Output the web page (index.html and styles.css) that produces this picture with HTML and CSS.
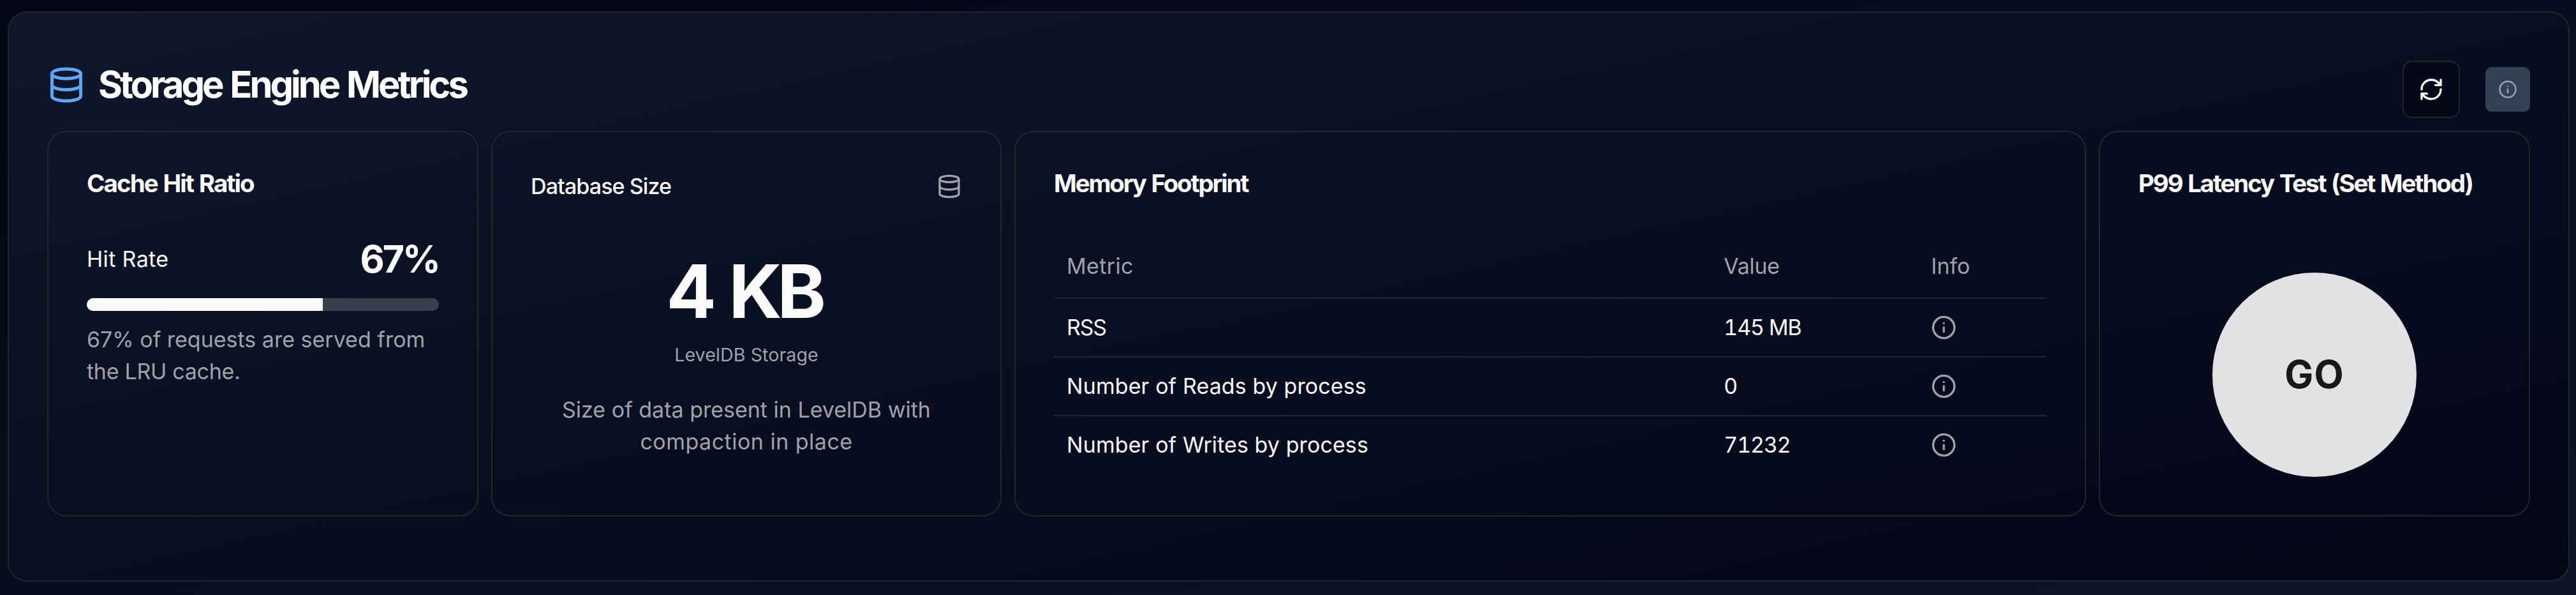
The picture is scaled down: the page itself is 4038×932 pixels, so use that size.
FILE: index.html
```html
<!DOCTYPE html>
<html lang="en">
<head>
<meta charset="utf-8">
<title>Storage Engine Metrics</title>
<link rel="stylesheet" href="styles.css">
</head>
<body>
<svg class="sprite" aria-hidden="true">
  <symbol id="i-database" viewBox="0 0 24 24"><ellipse cx="12" cy="5" rx="9" ry="3"/><path d="M3 5V19A9 3 0 0 0 21 19V5"/><path d="M3 12A9 3 0 0 0 21 12"/></symbol>
  <symbol id="i-info" viewBox="0 0 24 24"><circle cx="12" cy="12" r="10"/><path d="M12 16v-4"/><path d="M12 8h.01"/></symbol>
  <symbol id="i-refresh" viewBox="0 0 24 24"><path d="M3 12a9 9 0 0 1 9-9 9.75 9.75 0 0 1 6.74 2.74L21 8"/><path d="M21 3v5h-5"/><path d="M21 12a9 9 0 0 1-9 9 9.75 9.75 0 0 1-6.74-2.74L3 16"/><path d="M8 16H3v5"/></symbol>
</svg>
<main class="panel">
  <header class="panel-head">
    <div class="brand">
      <svg class="icon icon-lg"><use href="#i-database"/></svg>
      <h1 class="title">Storage Engine Metrics</h1>
    </div>
    <div class="actions">
      <button class="refresh" aria-label="Refresh"><svg class="icon"><use href="#i-refresh"/></svg></button>
      <button class="help" aria-label="Info"><svg class="icon icon-sm"><use href="#i-info"/></svg></button>
    </div>
  </header>
  <div class="cards">
    <section class="card">
      <h2 class="card-title">Cache Hit Ratio</h2>
      <div class="rate">
        <span class="rate-label">Hit Rate</span>
        <span class="rate-value">67%</span>
      </div>
      <div class="bar"><div class="bar-fill" style="width:67%"></div></div>
      <p class="note">67% of requests are served from<br><span class="note-end">the LRU cache.</span></p>
    </section>
    <section class="card db">
      <div class="db-head">
        <h2 class="db-title">Database Size</h2>
        <svg class="icon muted"><use href="#i-database"/></svg>
      </div>
      <div class="db-size">4 KB</div>
      <div class="db-sub">LevelDB Storage</div>
      <p class="db-note">Size of data present in LevelDB with<br><span class="db-note-end">compaction in place</span></p>
    </section>
    <section class="card">
      <h2 class="card-title memory-title">Memory Footprint</h2>
      <div class="table">
        <div class="row row-head"><span class="col-metric">Metric</span><span class="col-value">Value</span><span>Info</span></div>
        <div class="row"><span class="name name-rss">RSS</span><span class="num">145 MB</span><svg class="icon muted"><use href="#i-info"/></svg></div>
        <div class="row"><span class="name">Number of Reads by process</span><span class="num">0</span><svg class="icon muted"><use href="#i-info"/></svg></div>
        <div class="row"><span class="name">Number of Writes by process</span><span class="num">71232</span><svg class="icon muted"><use href="#i-info"/></svg></div>
      </div>
    </section>
    <section class="card">
      <h2 class="card-title latency-title">P99 Latency Test (Set Method)</h2>
      <button class="go">GO</button>
    </section>
  </div>
</main>
</body>
</html>
```
FILE: styles.css
```css
* { box-sizing: border-box; }

body {
  margin: 0;
  width: 4038px;
  height: 932px;
  padding: 18px 10px 21px 12px;
  overflow: hidden;
  background: linear-gradient(to bottom right, #020617, #0e1527);
  color: #fafafa;
  font-family: Inter, "Liberation Sans", sans-serif;
  font-size: 34px;
  line-height: 50px;
}

h1, h2, p { margin: 0; font-weight: inherit; font-size: inherit; }
button { padding: 0; border: 0; color: inherit; font: inherit; display: flex; align-items: center; justify-content: center; }
.sprite { display: none; }

.icon {
  width: 40px;
  height: 40px;
  flex: none;
  fill: none;
  stroke: currentColor;
  stroke-width: 2;
  stroke-linecap: round;
  stroke-linejoin: round;
}
.icon-lg { width: 60px; height: 60px; color: #60a5fa; }
.icon-sm { width: 30px; height: 30px; }
.muted { color: #a1a1aa; }

.panel {
  height: 893px;
  padding: 60px;
  border: 2px solid #262626;
  border-radius: 30px;
  background: linear-gradient(to bottom right, #0f172a, #020617);
}
.panel-head { display: flex; justify-content: space-between; height: 125px; }
.brand { display: flex; gap: 20px; padding-top: 23px; }
.title { color: #fff; font-size: 58px; font-weight: 700; line-height: 58px; letter-spacing: -4.05px; word-spacing: 3px; }
.actions { display: flex; align-items: center; gap: 40px; height: 90px; margin-top: 15px; }
.refresh { width: 90px; height: 90px; border: 2px solid #262626; border-radius: 15px; background: #050818; color: #fff; }
.help { width: 70px; height: 70px; border-radius: 10px; background: #334155; color: #94a3b8; }

.cards { display: grid; grid-template-columns: 676px 800px 1680px 676px; gap: 20px; height: 604px; }
.card { padding: 55px 60px 0; border: 2px solid #262626; border-radius: 30px; }
.card-title { font-size: 38.5px; font-weight: 650; white-space: nowrap; letter-spacing: -1.95px; word-spacing: 1.7px; }
.memory-title { letter-spacing: -2.2px; }
.latency-title { letter-spacing: -2.15px; }

.rate { display: flex; justify-content: space-between; align-items: center; height: 80px; margin-top: 54px; }
.rate-label { font-weight: 430; letter-spacing: 0.35px; }
.rate-value { font-size: 59px; font-weight: 650; letter-spacing: -3px; }
.bar { height: 20px; margin-top: 21px; border-radius: 10px; background: #3b404d; overflow: hidden; }
.bar-fill { height: 100%; background: #fafafa; }
.note { margin-top: 20px; color: #a1a1aa; white-space: nowrap; }
.note-end { letter-spacing: -0.29px; }

.db { padding-top: 60px; }
.db-head { display: flex; justify-content: space-between; align-items: center; height: 50px; }
.db-title { font-weight: 480; letter-spacing: -0.9px; }
.db-size { margin-top: 79px; padding-right: 8px; font-size: 116px; font-weight: 650; line-height: 120px; letter-spacing: -7.5px; word-spacing: 7px; text-align: center; }
.db-sub { margin-top: 20px; color: #a1a1aa; font-size: 28.6px; line-height: 40px; letter-spacing: 0.09px; text-align: center; }
.db-note { margin-top: 41px; color: #a1a1aa; text-align: center; white-space: nowrap; }
.db-note-end { letter-spacing: 0.49px; }

.table { margin-top: 56px; }
.row { display: grid; grid-template-columns: 1030px 325px 1fr; align-items: center; height: 92px; border-bottom: 2px solid #262626; }
.row > * { margin-left: 20px; }
.row:last-child { height: 90px; border-bottom: 0; }
.row-head { height: 100px; color: #a1a1aa; }
.col-metric { letter-spacing: 0.35px; }
.col-value { letter-spacing: -0.29px; }
.name { font-weight: 440; letter-spacing: 0.09px; }
.name-rss { letter-spacing: -1.2px; }
.num { font-weight: 440; letter-spacing: -1.15px; font-feature-settings: "tnum"; }

.go { width: 320px; height: 320px; margin: 115px auto 0; padding-bottom: 3px; border-radius: 50%; background: #e2e2e4; color: #18181b; font-size: 60px; font-weight: 650; letter-spacing: 1px; }
```
